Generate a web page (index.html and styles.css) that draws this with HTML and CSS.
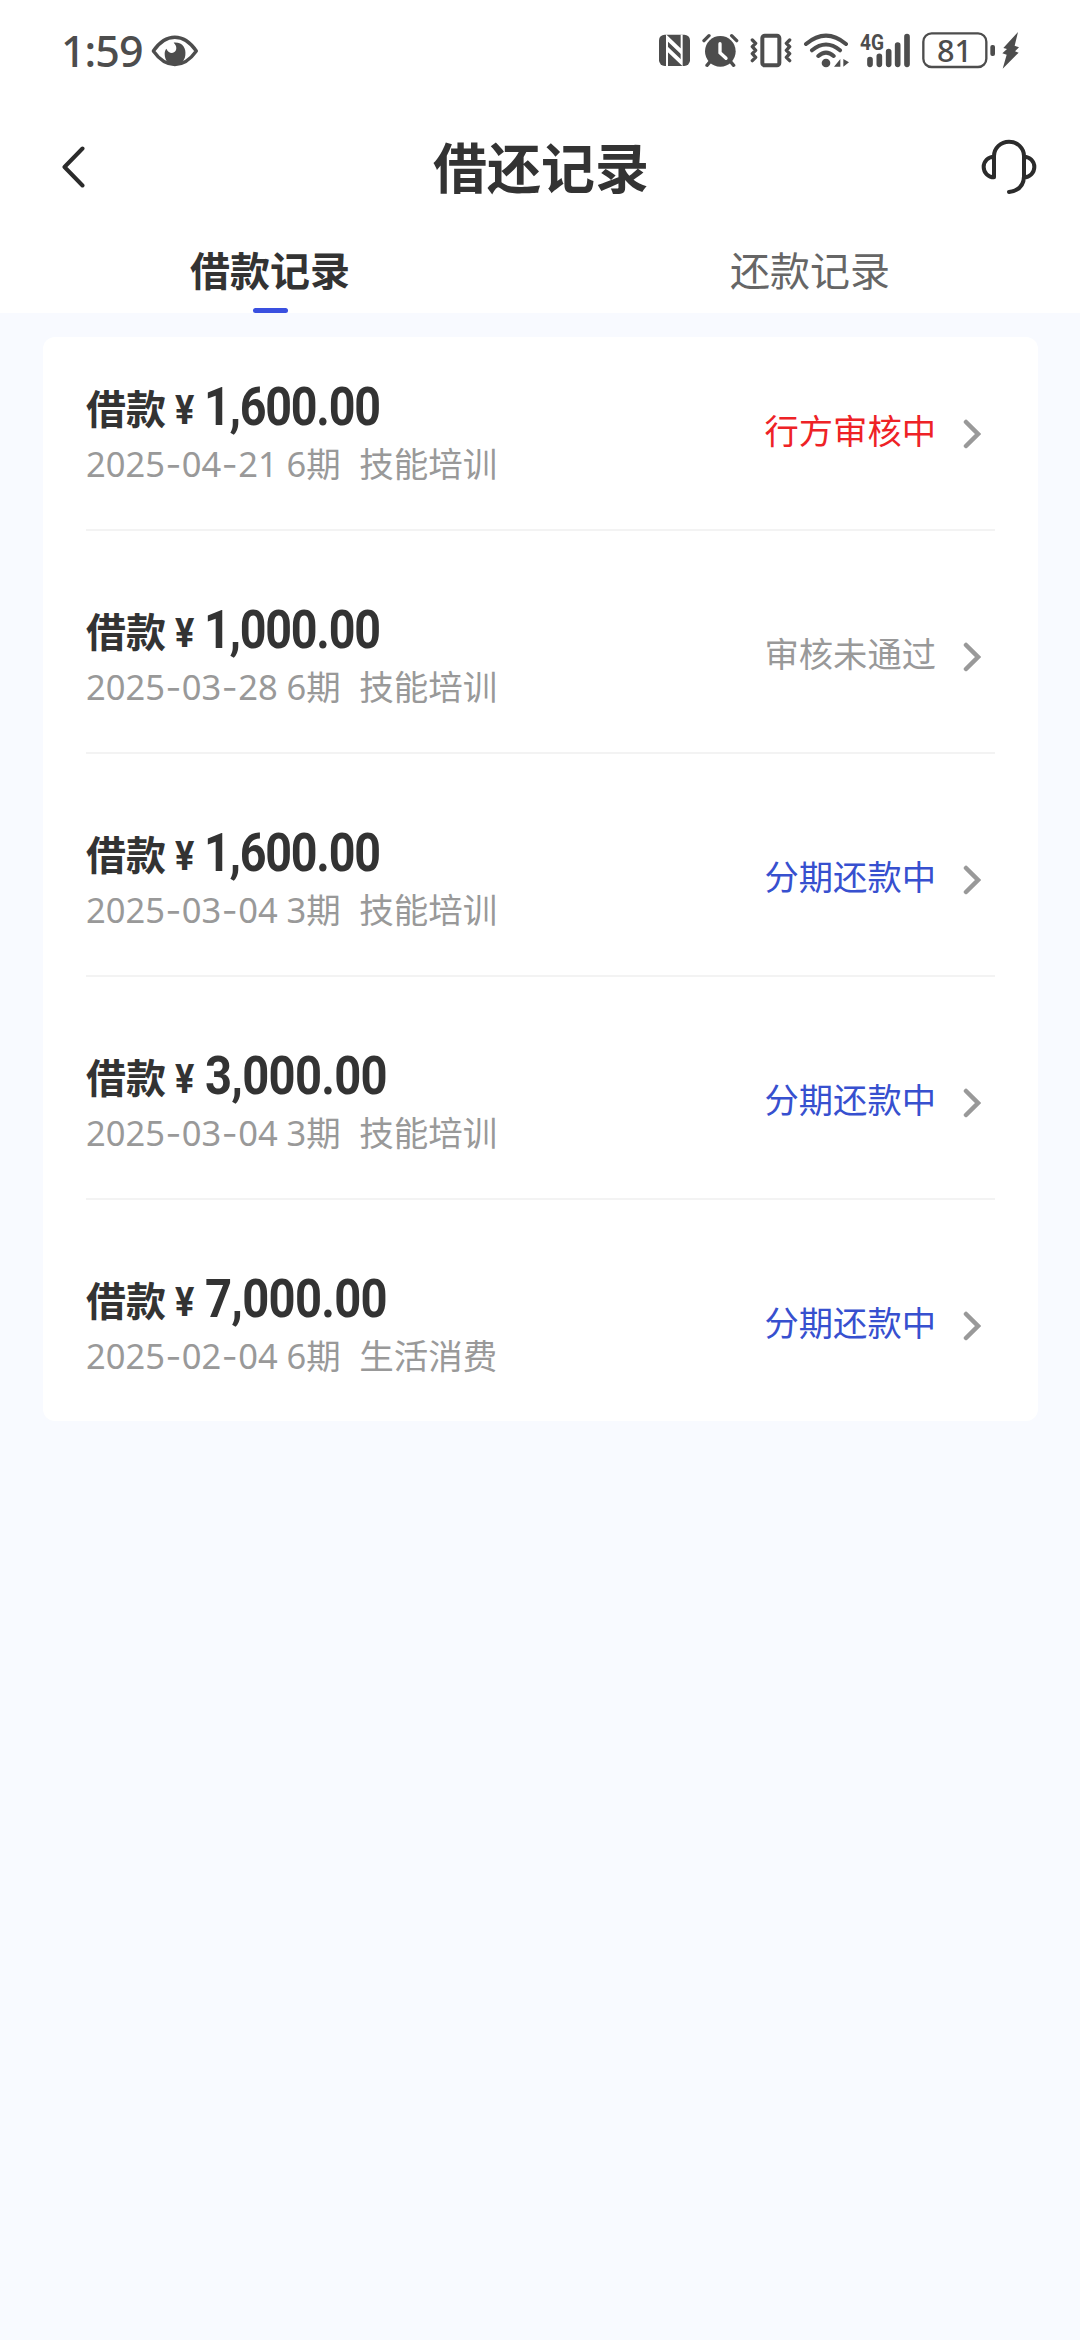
FILE: index.html
```html
<!DOCTYPE html>
<html lang="zh-CN">
<head>
<meta charset="utf-8">
<title>借还记录</title>
<link rel="stylesheet" href="styles.css">
</head>
<body>
<header class="top">
  <div class="status">
    <span class="time">1:59</span>
    <svg class="eye" width="48" height="36" viewBox="330 40 144 108" fill="none"><path d="M337 91C375 36 428 36 466 91C428 145 375 145 337 91Z" stroke="#4d4d4d" stroke-width="10" stroke-linejoin="round"/><path d="M398 66C426 64 436 84 433 104C431 122 417 133 401 133C384 133 371 120 371 99C371 92 373 88 376 84C382 96 391 99 399 95C409 89 408 75 398 66Z" fill="#4d4d4d"/></svg>
    <div class="sys">
      <svg width="35" height="40" viewBox="48 30 105 120"><rect x="54" y="44" width="93" height="94" rx="17" fill="#4d4d4d"/><path d="M78 138V50L122 92M122 44V132L78 90" fill="none" stroke="#fff" stroke-width="6"/><path d="M78 50L122 92V104L78 62ZM78 78L122 120V132L78 90Z" fill="#fff"/></svg>
      <svg class="g9" width="38" height="40" viewBox="180 30 114 120" fill="none" stroke="#4d4d4d" stroke-width="10" stroke-linecap="round"><circle cx="238" cy="94" r="46" fill="#4d4d4d" stroke="none"/><path d="M189 62L204 47M287 62L272 47M208 124L198 136M268 124L278 136"/><path d="M237 71V98L255 115" stroke="#fff" stroke-width="10"/></svg>
      <svg class="g10" width="44" height="40" viewBox="324 30 132 120" fill="none" stroke="#4d4d4d" stroke-linecap="round" stroke-linejoin="round"><rect x="364" y="47" width="51" height="89" rx="7" stroke-width="12"/><path d="M334 60L344 70L334 80L344 91L334 101L344 112L334 122M446 60L436 70L446 80L436 91L446 101L436 112L446 122" stroke-width="10"/></svg>
      <svg class="g10" width="48" height="40" viewBox="486 30 144 120" fill="none" stroke="#4d4d4d" stroke-width="12" stroke-linecap="round"><path d="M495 72Q555 22 615 72M513 91Q555 56 597 91M532 108Q555 88 578 108"/><circle cx="555" cy="129" r="13" fill="#4d4d4d" stroke="none"/><path d="M598 117V140H579ZM607 117V140L624 127Z" fill="#4d4d4d" stroke="none"/></svg>
      <svg class="g6" width="55" height="40" viewBox="78 30 165 120"><text x="87" y="91" class="net" textLength="72" lengthAdjust="spacingAndGlyphs">4G</text><path d="M117 119V133M145 109V133M173 95V133M200 75V133M228 50V133" stroke="#4d4d4d" stroke-width="17" stroke-linecap="round"/></svg>
      <svg class="g8" width="76" height="40" viewBox="267 30 228 120"><rect x="277" y="40" width="189" height="101" rx="25" fill="none" stroke="#4d4d4d" stroke-width="7"/><rect x="478" y="75" width="14" height="33" rx="6" fill="#4d4d4d"/><text x="318" y="125" class="pct">81</text></svg>
      <svg class="g6" width="17" height="40" viewBox="513 30 51 120"><path d="M561 36L517 84L528 87L514 100L527 104L515 146L563 98L552 94L564 82L551 77Z" fill="#4d4d4d"/></svg>
    </div>
  </div>
  <div class="nav">
    <svg width="24" height="42" viewBox="0 0 24 42"><path d="M21.500 2.500L3.500 21L21.500 39.500" fill="none" stroke="#2b2b2b" stroke-width="4" stroke-linecap="round" stroke-linejoin="round"/></svg>
    <h1>借还记录</h1>
    <svg width="56" height="56" viewBox="900 57 168 168" fill="none" stroke="#2b2b2b" stroke-width="12" stroke-linecap="round"><path d="M939 172V108A45 43 0 0 1 1029 108V169Q1028 210 984 216M939 110A31 31 0 0 0 939 172M1029 110A31 31 0 0 1 1029 172"/></svg>
  </div>
  <nav class="tabs">
    <div class="tab active">借款记录</div>
    <div class="tab">还款记录</div>
  </nav>
</header>
<main class="card">
  <section class="item">
    <div><div class="amount">借款<span class="yen">¥</span><span class="num lead-one">1,600.00</span></div><div class="meta">2025<i>-</i>04<i>-</i>21 6期 <span class="use">技能培训</span></div></div>
    <div class="state red">行方审核中</div><svg class="arrow" width="18" height="30" viewBox="0 0 18 30"><path d="M3 3L15 15L3 27"/></svg>
  </section>
  <section class="item">
    <div><div class="amount">借款<span class="yen">¥</span><span class="num lead-one">1,000.00</span></div><div class="meta">2025<i>-</i>03<i>-</i>28 6期 <span class="use">技能培训</span></div></div>
    <div class="state">审核未通过</div><svg class="arrow" width="18" height="30" viewBox="0 0 18 30"><path d="M3 3L15 15L3 27"/></svg>
  </section>
  <section class="item">
    <div><div class="amount">借款<span class="yen">¥</span><span class="num lead-one">1,600.00</span></div><div class="meta">2025<i>-</i>03<i>-</i>04 3期 <span class="use">技能培训</span></div></div>
    <div class="state blue">分期还款中</div><svg class="arrow" width="18" height="30" viewBox="0 0 18 30"><path d="M3 3L15 15L3 27"/></svg>
  </section>
  <section class="item">
    <div><div class="amount">借款<span class="yen">¥</span><span class="num">3,000.00</span></div><div class="meta">2025<i>-</i>03<i>-</i>04 3期 <span class="use">技能培训</span></div></div>
    <div class="state blue">分期还款中</div><svg class="arrow" width="18" height="30" viewBox="0 0 18 30"><path d="M3 3L15 15L3 27"/></svg>
  </section>
  <section class="item">
    <div><div class="amount">借款<span class="yen">¥</span><span class="num">7,000.00</span></div><div class="meta">2025<i>-</i>02<i>-</i>04 6期 <span class="use">生活消费</span></div></div>
    <div class="state blue">分期还款中</div><svg class="arrow" width="18" height="30" viewBox="0 0 18 30"><path d="M3 3L15 15L3 27"/></svg>
  </section>
</main>
</body>
</html>
```
FILE: styles.css
```css
* { box-sizing: border-box; }
body { margin: 0; min-height: 2340px; background: #f8faff; color: #333; font-family: "Noto Sans", "Noto Sans CJK SC", sans-serif; }
svg { display: block; flex: none; }
.top { height: 313px; background: #fff; }
.status { height: 100px; padding: 0 61px 0 61px; display: flex; align-items: center; color: #4d4d4d; }
.time { font-size: 43px; font-weight: 500; line-height: 60px; letter-spacing: -1px; width: 90px; white-space: nowrap; padding-top: 2px; }
.eye { margin-top: 3px; }
.sys { margin-left: auto; display: flex; }
.g6 { margin-left: 6px; }
.g8 { margin-left: 8px; }
.g9 { margin-left: 9px; }
.g10 { margin-left: 10px; }
.net { font: 700 66px Roboto, sans-serif; fill: #4d4d4d; }
.pct { font: 500 92px "Noto Sans", sans-serif; fill: #4d4d4d; }
.nav { height: 136px; padding: 0 43px 2px 61px; display: flex; align-items: center; justify-content: space-between; }
h1 { margin: -2px 0 0; font: 700 54px/80px "Noto Sans CJK SC", sans-serif; padding-left: 16px; }
.tabs { display: flex; height: 77px; }
.tab { flex: 1; display: flex; flex-direction: column; align-items: center; font: 400 40px/67px "Noto Sans CJK SC", sans-serif; color: #666; }
.active { font-weight: 700; color: #333; }
.active::after { content: ""; width: 35px; height: 6px; margin-top: 5px; border-radius: 3px; background: #3a50e0; }
.card { margin: 24px 42px 0 43px; padding: 0 43px; height: 1084px; background: #fff; border-radius: 12px; }
.item { height: 223px; display: flex; align-items: flex-start; border-bottom: 2px solid #f3f3f3; padding-top: 67px; }
.item:first-child { height: 194px; padding-top: 38px; }
.item:last-child { border: 0; }
.amount { font: 700 40px/64px "Noto Sans CJK SC", sans-serif; height: 64px; display: flex; align-items: baseline; white-space: nowrap; }
.yen { font: 700 40px/1 Roboto, sans-serif; width: 30px; margin-left: 9px; transform: scaleX(.9); transform-origin: 0 50%; }
.num { font: 700 53px/1 Roboto, sans-serif; letter-spacing: -.8px; transform: translateY(1px) scaleX(.89); transform-origin: 0 50%; }
.lead-one { letter-spacing: -1.4px; transform: translate(-1px, 1px) scaleX(.88); }
.meta { font-size: 34.5px; line-height: 50px; color: #999; white-space: nowrap; }
.meta i { font: 400 34.5px/1 Inter, sans-serif; margin: 0 .5px; }
.use { margin-left: 9.5px; }
.state { margin: 29px 27px 0 auto; font: 400 34.3px/50px "Noto Sans CJK SC", sans-serif; color: #999; }
.red { color: #ee2226; }
.blue { color: #3750cf; }
.arrow { margin: 44px 14px 0 0; fill: none; stroke: #999; stroke-width: 4.5; stroke-linecap: round; }
```
